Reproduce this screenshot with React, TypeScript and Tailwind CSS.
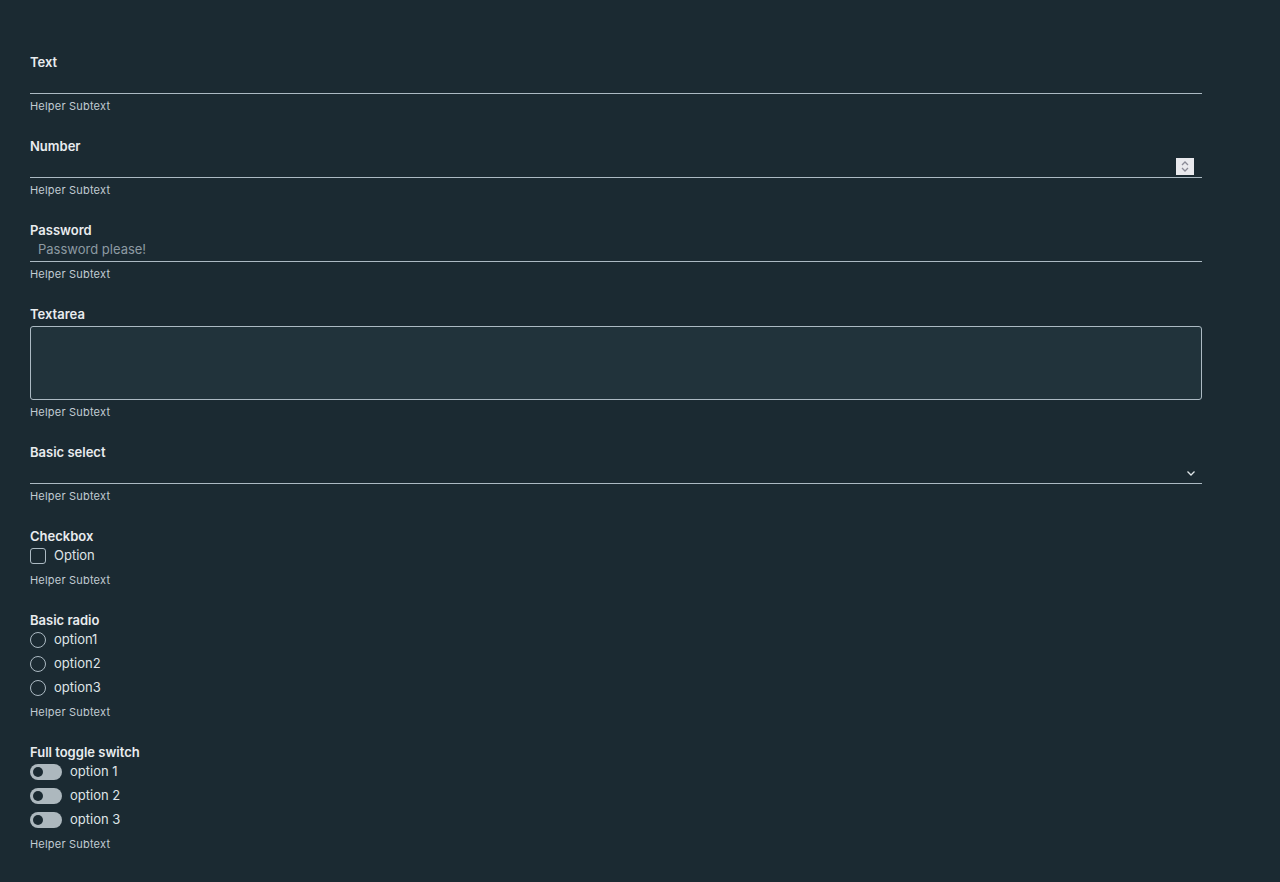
import React from 'react';

const font = { fontFamily: 'Inter, "Noto Sans", sans-serif' };

function Label({ children }: { children: React.ReactNode }) {
  return <div className="h-[18px] leading-[18px] text-[13px] font-semibold text-[#e9ecef]">{children}</div>;
}

function Helper() {
  return <div className="mt-[5px] h-[14px] leading-[14px] text-[11px] tracking-[0.2px] text-[#c1ccd2]">Helper Subtext</div>;
}

function Underline({ children }: { children?: React.ReactNode }) {
  return (
    <div className="h-[23px] border-b border-[#acbac3] flex items-center justify-between">
      {children}
    </div>
  );
}

export default function App() {
  return (
    <div style={font} className="min-h-[882px] bg-[#1b2a32] pt-[53px] pl-[30px] pr-[78px]">
      <div className="flex flex-col gap-6">
        {/* Text */}
        <div>
          <Label>Text</Label>
          <Underline />
          <Helper />
        </div>

        {/* Number */}
        <div>
          <Label>Number</Label>
          <Underline>
            <span />
            <div className="mr-[8px] mt-[1px] w-[18px] h-[17px] bg-[#e9e9ed] flex items-center justify-center">
              <svg width="10" height="13" viewBox="0 0 10 13" fill="none" stroke="#8a8a96" strokeWidth="1.3">
                <path d="M2 5 L5 2 L8 5" />
                <path d="M2 8 L5 11 L8 8" />
              </svg>
            </div>
          </Underline>
          <Helper />
        </div>

        {/* Password */}
        <div>
          <Label>Password</Label>
          <Underline>
            <span className="pl-[8px] text-[13px] text-[#8d9aa2]">Password please!</span>
          </Underline>
          <Helper />
        </div>

        {/* Textarea */}
        <div>
          <Label>Textarea</Label>
          <div className="mt-[3px] h-[74px] rounded-[3px] border border-[#acbac3] bg-[#21333b]" />
          <Helper />
        </div>

        {/* Select */}
        <div>
          <Label>Basic select</Label>
          <Underline>
            <span />
            <svg className="mr-[6px] mt-[2px]" width="10" height="7" viewBox="0 0 10 7" fill="none" stroke="#dfe5e8" strokeWidth="1.3">
              <path d="M1.5 1.5 L5 5 L8.5 1.5" />
            </svg>
          </Underline>
          <Helper />
        </div>

        {/* Checkbox */}
        <div>
          <Label>Checkbox</Label>
          <div className="-mt-px h-6 flex items-center gap-2">
            <div className="w-4 h-4 rounded-[3px] border border-[#acbac3]" />
            <span className="text-[13px] text-[#dfe4e7]">Option</span>
          </div>
          <Helper />
        </div>

        {/* Radio */}
        <div>
          <Label>Basic radio</Label>
          <div className="-mt-px">
            {['option1', 'option2', 'option3'].map(o => (
              <div key={o} className="h-6 flex items-center gap-2">
                <div className="w-4 h-4 rounded-full border border-[#acbac3]" />
                <span className="text-[13px] text-[#dfe4e7]">{o}</span>
              </div>
            ))}
          </div>
          <Helper />
        </div>

        {/* Toggle */}
        <div>
          <Label>Full toggle switch</Label>
          <div className="-mt-px">
            {['option 1', 'option 2', 'option 3'].map(o => (
              <div key={o} className="h-6 flex items-center gap-2">
                <div className="w-8 h-4 rounded-full bg-[#adb8be] flex items-center pl-[3px]">
                  <div className="w-[10px] h-[10px] rounded-full bg-[#1b2a32]" />
                </div>
                <span className="text-[13px] text-[#dfe4e7]">{o}</span>
              </div>
            ))}
          </div>
          <Helper />
        </div>
      </div>
    </div>
  );
}
